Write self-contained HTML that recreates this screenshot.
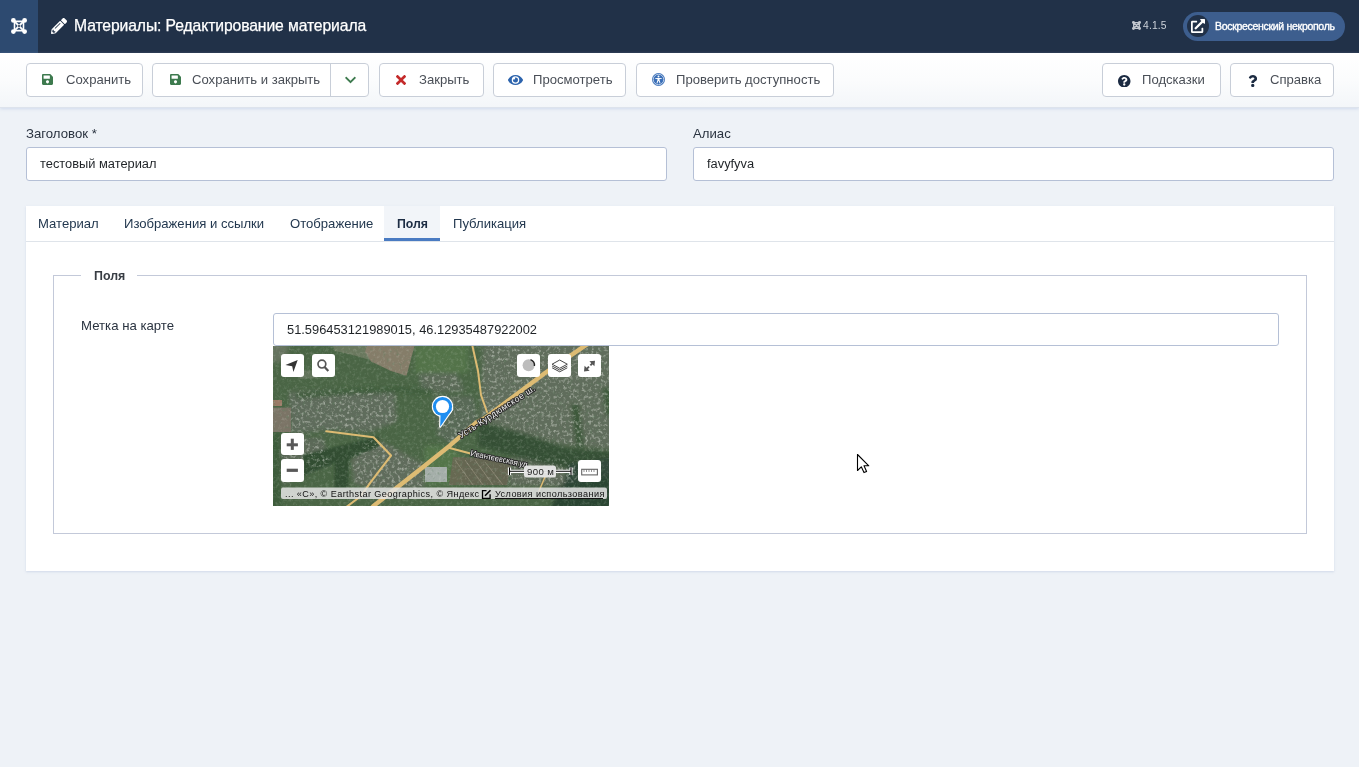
<!DOCTYPE html>
<html><head><meta charset="utf-8">
<style>
*{box-sizing:border-box;margin:0;padding:0}
html,body{width:1359px;height:767px;overflow:hidden}
body>*{will-change:transform}
body{background:#eef2f7;font-family:"Liberation Sans",sans-serif;color:#22262a;position:relative}
.abs{position:absolute}
svg{display:block}
#hdr{left:0;top:0;width:1359px;height:53px;background:#213148}
#logo{left:0;top:0;width:38px;height:53px;background:#2d4a70}
#title{left:73.5px;top:16.6px;font-size:15.7px;letter-spacing:-0.1px;color:#fff;white-space:nowrap;-webkit-text-stroke:0.25px #fff}
#ver{left:1143px;top:19.8px;font-size:10.3px;letter-spacing:0.15px;color:#cdd3da;white-space:nowrap}
#pill{left:1183px;top:12px;width:162px;height:29px;border-radius:15px;background:#3d5e8e}
#pillc{left:1187px;top:15px;width:22px;height:22px;border-radius:11px;background:#213148}
#pillt{left:1215px;top:20px;font-size:10.5px;letter-spacing:-0.3px;color:#fff;white-space:nowrap;-webkit-text-stroke:0.35px #fff}
#tb{left:0;top:53px;width:1359px;height:55px;background:linear-gradient(#fff 0%,#fbfcfd 50%,#f3f6f9 100%);border-bottom:1px solid #dde3ec;box-shadow:0 1px 3px rgba(170,190,225,0.45)}
.btn{position:absolute;top:63px;height:34px;border:1px solid #c8ced8;border-radius:4px;background:#fff;color:#4a4f57;font-size:13.1px;white-space:nowrap}
.btn .t{position:absolute;top:8px}
.btn svg{position:absolute}
.lbl{position:absolute;font-size:13.2px;color:#2a3340;white-space:nowrap}
.inp{position:absolute;height:34px;border:1px solid #b5c0d6;border-radius:3px;background:#fff;font-size:12.85px;color:#1f2327}
.inp .t{position:absolute;left:13px;top:8px;white-space:nowrap}
#card{left:26px;top:206px;width:1308px;height:365px;background:#fff;box-shadow:0 1px 2px rgba(180,195,220,0.5)}
#tabbar{left:26px;top:241px;width:1308px;height:1px;background:#dfe4ea}
.tab{position:absolute;top:216px;font-size:13.1px;color:#23384f;white-space:nowrap}
#fs{left:53px;top:275px;width:1254px;height:259px;border:1px solid #c3c9d9}
#legend{left:81px;top:268px;width:56px;height:14px;background:#fff}
#legendt{left:94px;top:269px;font-size:12.4px;font-weight:bold;color:#383d44}
#map{left:273px;top:346px;width:336px;height:160px;background:#52704b;overflow:hidden}
</style></head><body>
<div id="hdr" class="abs"></div>
<div id="logo" class="abs"></div>
<svg class="abs" style="left:11px;top:18px" width="16" height="16" viewBox="0 0 16 16">
 <g fill="none" stroke="#fff" stroke-width="1.6"><path d="M3.6 3.4 H12.4 M3.6 12.6 H12.4 M3.5 3.6 V12.4 M12.5 3.6 V12.4"/></g>
 <g fill="none" stroke="#fff" stroke-width="1.9"><path d="M4.2 4.2 L11.8 11.8 M11.8 4.2 L4.2 11.8"/></g>
 <circle cx="8" cy="8" r="1" fill="#1d2c44"/>
 <g fill="#fff"><circle cx="2.4" cy="2.4" r="2.4"/><circle cx="13.6" cy="2.4" r="2.4"/><circle cx="2.4" cy="13.6" r="2.4"/><circle cx="13.6" cy="13.6" r="2.4"/></g>
</svg>
<svg class="abs" style="left:51px;top:18px" width="16" height="16" viewBox="0 0 512 512"><path fill="#fff" d="M497.9 142.1l-46.1 46.1c-4.7 4.7-12.3 4.7-17 0l-111-111c-4.7-4.7-4.7-12.3 0-17l46.1-46.1c18.7-18.7 49.1-18.7 67.9 0l60.1 60.1c18.8 18.7 18.8 49.1 0 67.9zM284.2 99.8L21.6 362.4.4 483.9c-2.9 16.4 11.4 30.6 27.8 27.8l121.5-21.3 262.6-262.6c4.7-4.7 4.7-12.3 0-17l-111-111c-4.8-4.7-12.4-4.7-17.1 0zM124.1 339.9c-5.5-5.5-5.5-14.3 0-19.8l154-154c5.5-5.5 14.3-5.5 19.8 0s5.5 14.3 0 19.8l-154 154c-5.5 5.5-14.3 5.5-19.8 0zM88 424h48v36.3l-64.5 11.3-31.1-31.1L51.7 376H88v48z"/></svg>
<div id="title" class="abs">Материалы: Редактирование материала</div>

<svg class="abs" style="left:1132px;top:21px" width="9" height="9" viewBox="0 0 16 16">
 <g fill="none" stroke="#c3c8d0" stroke-width="2.4"><path d="M3 3 L13 3 M3 13 L13 13 M3 3 L3 13 M13 3 L13 13 M3.5 3.5 L12.5 12.5 M12.5 3.5 L3.5 12.5"/></g>
 <g fill="#c3c8d0"><circle cx="2.6" cy="2.6" r="2.6"/><circle cx="13.4" cy="2.6" r="2.6"/><circle cx="2.6" cy="13.4" r="2.6"/><circle cx="13.4" cy="13.4" r="2.6"/></g>
</svg>
<div id="ver" class="abs">4.1.5</div>
<div id="pill" class="abs"></div>
<div id="pillc" class="abs"></div>
<svg class="abs" style="left:1191px;top:19px" width="14" height="14" viewBox="0 0 512 512"><path fill="#fff" d="M432,320H400a16,16,0,0,0-16,16V448H64V128H208a16,16,0,0,0,16-16V80a16,16,0,0,0-16-16H48A48,48,0,0,0,0,112V464a48,48,0,0,0,48,48H400a48,48,0,0,0,48-48V336A16,16,0,0,0,432,320ZM488,0h-128c-21.37,0-32.05,25.91-17,41l35.730,35.73L135,320.37a24,24,0,0,0,0,34L157.67,377a24,24,0,0,0,34,0L435.28,133.32,471,169c15,15,41,4.5,41-17V24A24,24,0,0,0,488,0Z"/></svg>
<div id="pillt" class="abs">Воскресенский некрополь</div>

<div id="tb" class="abs"></div>

<div class="btn" style="left:26px;width:117px"><svg style="left:15px;top:9px" width="11" height="13" viewBox="0 0 448 512"><path fill="#3d7a4e" d="M433.941 129.941l-83.882-83.882A48 48 0 0 0 316.118 32H48C21.490 32 0 53.49 0 80v352c0 26.51 21.49 48 48 48h352c26.51 0 48-21.49 48-48V163.882a48 48 0 0 0-14.059-33.941zM224 416c-35.346 0-64-28.654-64-64 0-35.346 28.654-64 64-64s64 28.654 64 64c0 35.346-28.654 64-64 64zm96-304.52V212c0 6.627-5.373 12-12 12H76c-6.627 0-12-5.373-12-12V108c0-6.627 5.373-12 12-12h228.52c3.183 0 6.235 1.264 8.485 3.515l3.48 3.480A11.996 11.996 0 0 1 320 111.48z"/></svg><span class="t" style="left:39px">Сохранить</span></div>
<div class="btn" style="left:152px;width:217px"><svg style="left:17px;top:9px" width="11" height="13" viewBox="0 0 448 512"><path fill="#3d7a4e" d="M433.941 129.941l-83.882-83.882A48 48 0 0 0 316.118 32H48C21.490 32 0 53.49 0 80v352c0 26.51 21.49 48 48 48h352c26.51 0 48-21.49 48-48V163.882a48 48 0 0 0-14.059-33.941zM224 416c-35.346 0-64-28.654-64-64 0-35.346 28.654-64 64-64s64 28.654 64 64c0 35.346-28.654 64-64 64zm96-304.52V212c0 6.627-5.373 12-12 12H76c-6.627 0-12-5.373-12-12V108c0-6.627 5.373-12 12-12h228.52c3.183 0 6.235 1.264 8.485 3.515l3.48 3.480A11.996 11.996 0 0 1 320 111.48z"/></svg><span class="t" style="left:39px">Сохранить и закрыть</span><div class="abs" style="left:177px;top:0;width:1px;height:32px;background:#c8ced8"></div><svg style="left:192px;top:12px" width="11" height="8" viewBox="0 120 448 272"><path fill="#3d7a4e" d="M207.029 381.476L12.686 187.132c-9.373-9.373-9.373-24.569 0-33.941l22.667-22.667c9.357-9.357 24.522-9.375 33.901-.04L224 284.505l154.745-154.021c9.379-9.335 24.544-9.317 33.901.04l22.667 22.667c9.373 9.373 9.373 24.569 0 33.941L240.971 381.476c-9.373 9.372-24.569 9.372-33.942 0z"/></svg></div>
<div class="btn" style="left:379px;width:105px"><svg style="left:16px;top:11px" width="10" height="10" viewBox="0 0 352 352"><path fill="#c42a2a" transform="translate(0,-80)" d="M242.72 256l100.07-100.07c12.28-12.28 12.28-32.19 0-44.48l-22.24-22.240c-12.28-12.28-32.19-12.28-44.48 0L176 189.28 75.93 89.21c-12.28-12.28-32.19-12.28-44.48 0L9.21 111.45c-12.28 12.28-12.28 32.19 0 44.48L109.28 256 9.21 356.07c-12.28 12.28-12.28 32.19 0 44.48l22.24 22.24c12.28 12.28 32.2 12.28 44.48 0L176 322.72l100.07 100.07c12.28 12.28 32.2 12.28 44.48 0l22.24-22.24c12.28-12.28 12.28-32.19 0-44.48L242.72 256z"/></svg><span class="t" style="left:39px">Закрыть</span></div>
<div class="btn" style="left:493px;width:133px"><svg style="left:14px;top:11px" width="15" height="10" viewBox="0 64 576 384"><path fill="#2d64ad" d="M572.52 241.4C518.29 135.59 410.93 64 288 64S57.68 135.64 3.48 241.41a32.35 32.35 0 0 0 0 29.19C57.71 376.410 165.07 448 288 448s230.32-71.64 284.52-177.41a32.35 32.35 0 0 0 0-29.190zM288 400a144 144 0 1 1 144-144 143.93 143.93 0 0 1-144 144zm0-240a95.31 95.31 0 0 0-25.310 3.79 47.85 47.85 0 0 1-66.9 66.9A95.78 95.78 0 1 0 288 160z"/></svg><span class="t" style="left:39px">Просмотреть</span></div>
<div class="btn" style="left:636px;width:198px"><svg style="left:15px;top:9px" width="13" height="13" viewBox="0 0 26 26"><circle cx="13" cy="13" r="13" fill="#3a6fb8"/><circle cx="13" cy="13" r="10.5" fill="none" stroke="#fff" stroke-width="1.3"/><circle cx="13" cy="7.2" r="2" fill="#fff"/><path fill="#fff" d="M6.5 10 L19.5 10 L19.5 11.6 L15 12.2 L15.2 14.5 L17 20.5 L15.4 21 L13.4 15.8 L12.6 15.8 L10.6 21 L9 20.5 L10.8 14.5 L11 12.2 L6.5 11.6 Z"/></svg><span class="t" style="left:39px">Проверить доступность</span></div>
<div class="btn" style="left:1102px;width:119px"><svg style="left:15px;top:10.5px" width="12.5" height="12.5" viewBox="8 8 496 496"><path fill="#1c2b42" d="M504 256c0 136.997-111.043 248-248 248S8 392.997 8 256C8 119.083 119.043 8 256 8s248 111.083 248 248zM262.655 90c-54.497 0-89.255 22.957-116.549 63.758-3.536 5.286-2.353 12.415 2.715 16.258l34.699 26.31c5.205 3.947 12.621 3.008 16.665-2.122 17.864-22.658 30.113-35.797 57.303-35.797 20.429 0 45.698 13.148 45.698 32.958 0 14.976-12.363 22.667-32.534 33.976C247.128 238.528 216 254.941 216 296v4c0 6.627 5.373 12 12 12h56c6.627 0 12-5.373 12-12v-1.333c0-28.462 83.186-29.647 83.186-106.667 0-58.002-60.165-102-116.531-102zM256 338c-25.365 0-46 20.635-46 46 0 25.364 20.635 46 46 46s46-20.636 46-46c0-25.365-20.635-46-46-46z"/></svg><span class="t" style="left:39px">Подсказки</span></div>
<div class="btn" style="left:1230px;width:104px"><svg style="left:16.5px;top:10.5px" width="9.5" height="12" viewBox="0 0 384 512"><path fill="#1c2b42" d="M202.021 0C122.202 0 70.503 32.703 29.914 91.026c-7.363 10.58-5.093 25.086 5.178 32.874l43.138 32.709c10.373 7.865 25.132 6.026 33.253-4.148 25.049-31.381 43.63-49.449 82.757-49.449 30.764 0 68.816 19.799 68.816 49.631 0 22.552-18.617 34.134-48.993 51.164-35.423 19.86-82.299 44.576-82.299 106.405V320c0 13.255 10.745 24 24 24h72.471c13.255 0 24-10.745 24-24v-5.773c0-42.86 125.268-44.645 125.268-160.627C377.504 66.256 286.902 0 202.021 0zM192 373.459c-38.196 0-69.271 31.075-69.271 69.271 0 38.195 31.075 69.27 69.271 69.27s69.271-31.075 69.271-69.271-31.075-69.270-69.271-69.27z"/></svg><span class="t" style="left:39px">Справка</span></div>

<div class="lbl" style="left:26px;top:126px">Заголовок *</div>
<div class="inp" style="left:26px;top:147px;width:641px"><span class="t">тестовый материал</span></div>
<div class="lbl" style="left:693px;top:126px">Алиас</div>
<div class="inp" style="left:693px;top:147px;width:641px"><span class="t">favyfyva</span></div>

<div id="card" class="abs"></div>
<div class="abs" style="left:384px;top:206px;width:56px;height:35px;background:#f2f5f9"></div>
<div id="tabbar" class="abs"></div>
<div class="tab" style="left:38px">Материал</div>
<div class="tab" style="left:124px">Изображения и ссылки</div>
<div class="tab" style="left:290px">Отображение</div>
<div class="tab" style="left:397px;top:217px;font-weight:bold;font-size:12.3px;color:#1d2d44">Поля</div>
<div class="abs" style="left:384px;top:238px;width:56px;height:3px;background:#4a7bc2"></div>
<div class="tab" style="left:453px">Публикация</div>

<div id="fs" class="abs"></div>
<div id="legend" class="abs"></div>
<div id="legendt" class="abs">Поля</div>
<div class="lbl" style="left:81px;top:318px">Метка на карте</div>
<div class="inp" style="left:273px;top:313px;width:1006px;height:33px"><span class="t">51.596453121989015, 46.12935487922002</span></div>
<div id="map" class="abs"><svg width="336" height="160" viewBox="0 0 336 160" style="position:absolute;left:0;top:0">
<defs>
<filter id="blur1" x="-20%" y="-20%" width="140%" height="140%"><feGaussianBlur stdDeviation="1"/></filter>
<filter id="blur2" x="-20%" y="-20%" width="140%" height="140%"><feGaussianBlur stdDeviation="2.2"/></filter>
<filter id="speck" x="0" y="0" width="100%" height="100%">
 <feTurbulence type="fractalNoise" baseFrequency="0.32" numOctaves="3" seed="7" result="n"/>
 <feColorMatrix in="n" type="matrix" values="0 0 0 0 0.82  0 0 0 0 0.84  0 0 0 0 0.78  0 0 0 3.0 -1.5"/>
</filter>
<filter id="speckd" x="0" y="0" width="100%" height="100%">
 <feTurbulence type="fractalNoise" baseFrequency="0.3" numOctaves="2" seed="3" result="n"/>
 <feColorMatrix in="n" type="matrix" values="0 0 0 0 0.12  0 0 0 0 0.22  0 0 0 0 0.12  0 0 0 2.6 -1.45"/>
</filter>
<mask id="settle" x="0" y="0" width="336" height="160" maskUnits="userSpaceOnUse"><g fill="#fff" filter="url(#blur2)">
 <path d="M16 46 L60 44 L100 43 L122 47 L124 76 L95 86 L55 84 L18 88 Z"/>
 <path d="M100 93 L118 100 L150 118 L152 142 L98 142 L80 138 L78 112 Z"/>
 <path d="M8 92 L50 92 L58 118 L30 127 L10 140 Z"/>
 <path d="M145 27 L183 27 L192 45 L150 47 Z"/>
 <path d="M160 50 L200 50 L205 75 L180 98 L165 90 Z"/>
 <path d="M210 0 L336 0 L336 104 L290 99 L250 87 L207 74 Z"/>
 <path d="M236 112 L305 114 L305 140 L236 140 Z"/>
</g></mask>
</defs>
<rect width="336" height="160" fill="#4a6545"/>
<g filter="url(#blur2)">
 <path d="M-5 -5 L16 -5 L14 15 L-5 17 Z" fill="#66735f"/>
 <path d="M16 46 L60 44 L100 43 L122 47 L124 76 L95 86 L55 84 L18 88 Z" fill="#5f6c5b"/>
 <path d="M100 93 L118 100 L150 118 L152 142 L98 142 L80 138 L78 112 Z" fill="#606c5b"/>
 <path d="M8 92 L50 92 L58 118 L30 127 L10 140 Z" fill="#5c6958"/>
 <path d="M145 27 L183 27 L192 45 L150 47 Z" fill="#5c6b58"/>
 <path d="M160 50 L200 50 L205 75 L180 98 L165 90 Z" fill="#596956"/>
 <path d="M210 -5 L341 -5 L341 104 L290 99 L250 87 L207 74 Z" fill="#606d5c"/>
 <path d="M236 112 L305 114 L305 140 L236 140 Z" fill="#5f6b5a"/>
 <path d="M-5 87 L8 87 L8 165 L-5 165 Z" fill="#3d5c3a"/>
 <path d="M205 76 L250 87 L292 102 L341 106 L341 122 L300 124 L262 116 L205 100 Z" fill="#344f35"/><path d="M296 118 L341 112 L341 165 L300 165 L290 140 Z" fill="#31493a"/>
 <path d="M298 58 L306 58 L311 100 L303 100 Z" fill="#3a5637"/>
 <path d="M329 42 L341 42 L341 70 L333 70 Z" fill="#3d5a3a"/>
 <path d="M286 140 L341 130 L341 165 L276 165 Z" fill="#2c4431"/>
 <path d="M23 50 L76 45.7 L122 44 L160 45.7" fill="none" stroke="#3d5c3a" stroke-width="5"/>
 <path d="M141.7 -5 L195 -5 L195 27 L141.7 27 Z" fill="#537349"/>
 <path d="M152 100 L178 100 L190 112 L190 139 L152 139 Z" fill="#52744a"/>
</g>
<g filter="url(#blur1)"><path d="M30 109 L62.6 101 L100 91.5 L106 90 L106 100.5 L76 113 L75 142 L61.5 142 L61.5 117 L30 130 Z" fill="#304d33"/></g>
<path d="M60 0 L95 0 L97 14 L80 9 L62 5 Z" fill="#77806a" opacity="0.7"/><path d="M94 0 L141.5 0 L133.5 29.7 L118 25 L98 15.5 L92 6 Z" fill="#8a7f6c" opacity="0.92"/><path d="M25 25 L42 24 L44 32 L27 33 Z" fill="#75806c" opacity="0.6"/>
<path d="M0 54 L9 54 L9 60 L0 60 Z" fill="#9a7a66"/>
<path d="M0 61.6 L18 61.6 L18 86 L0 86 Z" fill="#7b7466"/>
<path d="M180 111 L210 112 L238 118 L234 139 L176 139 Z" fill="#6e6656" opacity="0.75"/>
<path d="M182 114 L200 139 M192 114 L210 139 M202 114 L220 139 M212 116 L230 139" stroke="#a8a08c" stroke-width="0.9" opacity="0.55"/>
<path d="M152 121 L174 121 L174 136 L152 136 Z" fill="#b3b8ba" opacity="0.85"/>
<rect width="336" height="160" filter="url(#speck)" opacity="0.16"/><g mask="url(#settle)"><rect width="336" height="160" filter="url(#speck)" opacity="0.36"/></g>
<rect width="336" height="160" filter="url(#speckd)" opacity="0.5"/>
<g fill="none" stroke="#ddbb73" stroke-linecap="round" stroke-linejoin="round">
 <path d="M316 -3 L272 27 L212 72 L204 76 L176.7 99.7 L152 119.5 L100.5 160 L98 163" stroke-width="4.4"/>
 <path d="M199 -2 L205 25 L208 49 L214 66" stroke-width="2"/>
 <path d="M53.3 85.2 L100.5 91.3 L118 109.6 L97.5 136.3 L88 150 L72 162" stroke-width="2.1"/>
 <path d="M176.7 102 L196.5 107.3" stroke-width="2.2"/>
 <path d="M272 131 L266 145" stroke-width="1.5"/>
</g>
</svg>



<svg width="336" height="160" viewBox="0 0 336 160" style="position:absolute;left:0;top:0">
<g fill="#fff">
 <rect x="8" y="8" width="23" height="23" rx="3"/>
 <rect x="39" y="8" width="23" height="23" rx="3"/>
 <rect x="244" y="8" width="23" height="23" rx="3"/>
 <rect x="275" y="8" width="23" height="23" rx="3"/>
 <rect x="305" y="8" width="23" height="23" rx="3"/>
 <rect x="8" y="87" width="23" height="22" rx="3"/>
 <rect x="8" y="113" width="23" height="23" rx="3"/>
 <rect x="305" y="114" width="23" height="22" rx="3"/>
</g>
<path d="M24.7 14.1 L12.4 19 L19.2 20.2 L20.4 26.1 Z" fill="#333"/>
<circle cx="48.9" cy="18.1" r="3.9" fill="none" stroke="#555" stroke-width="1.7"/>
<path d="M51.6 21 L55.3 24.9" stroke="#555" stroke-width="2.2"/>
<circle cx="255.6" cy="19.2" r="6" fill="#bdbdbd"/>
<path d="M257.5 13.6 A6 6 0 0 1 261.4 20" fill="none" stroke="#222" stroke-width="1.4"/>
<g fill="none" stroke="#333" stroke-width="0.9" stroke-linejoin="round">
 <path d="M279.1 21.8 L286.7 25.8 L294.3 21.8"/>
 <path d="M279.1 20 L286.7 24 L294.3 20"/>
 <path d="M286.7 14 L279.1 18.2 L286.7 22.3 L294.3 18.2 Z" fill="#fff"/>
</g>
<g stroke="#555" stroke-width="1.9" fill="none"><path d="M313 23.6 L316 20.6 M320.3 16.4 L317.4 19.3"/></g>
<path d="M311 25.4 L311.6 19.8 L316.6 24.8 Z M322 14.7 L321.4 20.3 L316.4 15.3 Z" fill="#555"/>
<g fill="#585858"><rect x="13.7" y="97.3" width="11.2" height="3"/><rect x="17.8" y="92.7" width="3" height="11.2"/><rect x="13.7" y="122.7" width="11.2" height="3.2"/></g>
<rect x="308.7" y="123.3" width="15.7" height="5.6" fill="none" stroke="#666" stroke-width="1.1"/>
<path d="M311 123.5 v2.5 M313.5 123.5 v2.5 M316 123.5 v2.5 M318.5 123.5 v2.5 M321 123.5 v2.5" stroke="#666" stroke-width="0.7"/>
<g>
 <g fill="#fff" stroke="#fff" stroke-width="2.2" stroke-linejoin="round"><circle cx="169.5" cy="60.5" r="9.6"/><path d="M167.5 69.6 L179.3 63.1 L167.2 80.7 Z"/></g>
 <g fill="#1e8ef0"><circle cx="169.5" cy="60.5" r="9.6"/><path d="M167.5 69.6 L179.3 63.1 L167.2 80.7 Z"/></g>
 <circle cx="169.5" cy="60.5" r="6.6" fill="#fff"/>
</g>
<g font-family="Liberation Sans, sans-serif" font-size="8.6" fill="#f4f4f4" stroke="#2a2a2a" stroke-width="2" paint-order="stroke" stroke-linejoin="round">
 <text transform="translate(188,92.5) rotate(-33)" textLength="89" lengthAdjust="spacing">Усть-Курдюмское ш.</text>
 <text transform="translate(197,109.5) rotate(12)" font-size="8.2" textLength="60" lengthAdjust="spacing">Ивантеевская ул.</text>
</g>
<rect x="8" y="141.5" width="326" height="11.5" rx="2" fill="#e6e6e6" opacity="0.85"/>
<path d="M236.5 121.5 v7.5 M298 121.5 v7.5 M236.5 125.3 H298" stroke="#fff" stroke-width="3.2"/>
<path d="M236.5 121.5 v7.5 M298 121.5 v7.5 M236.5 125.3 H298" stroke="#000" stroke-width="1.1"/>
<rect x="251" y="119.6" width="32" height="12" rx="2.5" fill="#e8e8e8" opacity="0.95"/>
<text x="254" y="129.2" font-family="Liberation Sans, sans-serif" font-size="9.6" fill="#222" letter-spacing="0.4">900 м</text>
<text x="12" y="150.8" font-family="Liberation Sans, sans-serif" font-size="9.1" fill="#111" letter-spacing="0.42">... «С», © Earthstar Geographics, © Яндекс</text>
<g transform="translate(208.5,143.7)" fill="none" stroke="#000" stroke-width="1.3"><path d="M5 1 H1 V8.6 H8.6 V4.6"/><path d="M3.5 6 L9 0.6" stroke-width="1.6"/></g>
<text x="222" y="150.8" font-family="Liberation Sans, sans-serif" font-size="9.1" fill="#111" letter-spacing="0.42">Условия использования</text>
<rect x="222" y="152" width="108" height="1" fill="#111"/>
</svg>
</div>

<svg class="abs" style="left:856px;top:453px" width="14" height="21" viewBox="0 0 14 21"><path d="M1.5 1.5 L1.5 17.5 L5.3 13.8 L8 19.6 L10.6 18.5 L8 12.8 L12.8 12.8 Z" fill="#fff" stroke="#000" stroke-width="1.1" stroke-linejoin="round"/></svg>
</body></html>
